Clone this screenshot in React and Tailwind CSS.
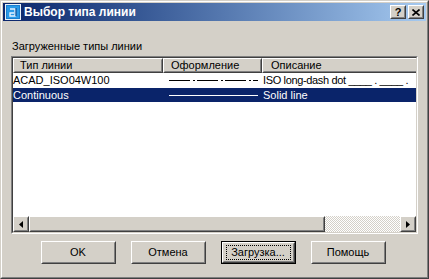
import React from 'react'

const face = 'bg-[#d4d0c8]'

function Raised({ className = '', children }) {
  return (
    <div className={`shrink-0 border border-t-white border-l-white border-b-[#404040] border-r-[#404040] ${className}`}>
      <div className="w-full h-full border border-t-[#d4d0c8] border-l-[#d4d0c8] border-b-[#808080] border-r-[#808080] flex items-center justify-center">
        {children}
      </div>
    </div>
  )
}

function Button({ label, isDefault }) {
  if (isDefault) {
    return (
      <div className="w-[75px] h-[23px] border border-black">
        <Raised className="w-full h-full">
          <div className="w-[65px] h-[15px] border border-dotted border-black flex items-center justify-center">{label}</div>
        </Raised>
      </div>
    )
  }
  return <Raised className="w-[75px] h-[23px]">{label}</Raised>
}

function AppIcon() {
  return (
    <svg width="16" height="16" viewBox="0 0 16 16">
      <rect x="0" y="0" width="16" height="16" fill="#e8f0f8" />
      <rect x="1" y="1" width="14" height="14" fill="#1a7fd0" />
      <rect x="2" y="2" width="12" height="12" fill="#2a9ae8" />
      <path d="M5 5h5v7H5V9h4" fill="none" stroke="#e6f2ff" strokeWidth="1.4" />
      <path d="M11 4v8" stroke="#0a3a80" strokeWidth="1" />
    </svg>
  )
}

function DashDot() {
  return (
    <svg width="90" height="3" viewBox="0 0 90 3">
      <g stroke="#000" strokeWidth="1">
        <line x1="0" y1="1.5" x2="21" y2="1.5" />
        <line x1="24" y1="1.5" x2="26" y2="1.5" />
        <line x1="28" y1="1.5" x2="49" y2="1.5" />
        <line x1="52" y1="1.5" x2="54" y2="1.5" />
        <line x1="56" y1="1.5" x2="77" y2="1.5" />
        <line x1="80" y1="1.5" x2="82" y2="1.5" />
        <line x1="84" y1="1.5" x2="89" y2="1.5" />
      </g>
    </svg>
  )
}

export default function App() {
  return (
    <div className="w-[429px] h-[279px] text-[11px] text-black" style={{ fontFamily: '"Liberation Sans", Arial, sans-serif' }}>
      <div className={`w-full h-full border border-t-[#d4d0c8] border-l-[#d4d0c8] border-b-[#404040] border-r-[#404040] ${face}`}>
        <div className="w-full h-full border border-t-white border-l-white border-b-[#808080] border-r-[#808080] p-px flex flex-col">
          {/* title bar */}
          <div className="h-[18px] flex items-center pl-[2px] pr-[2px] bg-gradient-to-r from-[#0a246a] to-[#a6caf0]">
            <AppIcon />
            <span className="ml-[3px] text-white font-bold text-[12px] leading-none">Выбор типа линии</span>
            <div className="ml-auto flex gap-[2px]">
              <Raised className={`w-[16px] h-[14px] ${face}`}>
                <span className="font-bold text-[11px] leading-none">?</span>
              </Raised>
              <Raised className={`w-[16px] h-[14px] ${face}`}>
                <svg width="8" height="7" viewBox="0 0 8 7">
                  <path d="M0.5 0.5L7.5 6.5M7.5 0.5L0.5 6.5" stroke="#000" strokeWidth="1.6" />
                </svg>
              </Raised>
            </div>
          </div>

          <div className="px-[8px] pt-[19px]">
            <div className="leading-[13px] pl-px">Загруженные типы линии</div>

            {/* list box */}
            <div className="mt-[3px] h-[178px] border border-t-[#808080] border-l-[#808080] border-b-white border-r-white">
              <div className="h-full border border-t-[#404040] border-l-[#404040] border-b-[#d4d0c8] border-r-[#d4d0c8] bg-white flex flex-col overflow-hidden">
                <div className="flex h-[15px] shrink-0">
                  <Raised className={`w-[150px] h-full ${face}`}>
                    <span className="w-full pl-[5px]">Тип линии</span>
                  </Raised>
                  <Raised className={`w-[99px] h-full ${face}`}>
                    <span className="w-full pl-[6px]">Оформление</span>
                  </Raised>
                  <Raised className={`w-[170px] h-full ${face}`}>
                    <span className="w-full pl-[7px]">Описание</span>
                  </Raised>
                </div>
                <div className="flex h-[15px] items-center">
                  <span className="w-[150px] shrink-0">ACAD_ISO04W100</span>
                  <span className="w-[99px] shrink-0 pl-[6px] flex items-center"><DashDot /></span>
                  <span className="pl-px whitespace-nowrap tracking-[-0.35px]">ISO long-dash dot ____ . ____ .</span>
                </div>
                <div className="flex h-[14px] items-center bg-[#0a246a] text-white">
                  <span className="w-[150px] shrink-0">Continuous</span>
                  <span className="w-[99px] shrink-0 pl-[6px] flex items-center">
                    <span className="block w-[89px] h-px bg-white" />
                  </span>
                  <span className="pl-px">Solid line</span>
                </div>
                <div className="flex-1" />
                {/* horizontal scrollbar */}
                <div className="flex h-[16px] shrink-0">
                  <Raised className={`w-[16px] h-full ${face}`}>
                    <svg width="4" height="7" viewBox="0 0 4 7"><path d="M4 0L0 3.5L4 7Z" fill="#000" /></svg>
                  </Raised>
                  <Raised className={`w-[296px] h-full ${face}`} />
                  <div className="flex-1 bg-[repeating-conic-gradient(#d4d0c8_0_25%,#ffffff_0_50%)] bg-[length:2px_2px]" />
                  <Raised className={`w-[16px] h-full ${face}`}>
                    <svg width="4" height="7" viewBox="0 0 4 7"><path d="M0 0L4 3.5L0 7Z" fill="#000" /></svg>
                  </Raised>
                </div>
              </div>
            </div>

            <div className="mt-[7px] flex justify-center gap-[15px] pr-[3px]">
              <Button label="OK" />
              <Button label="Отмена" />
              <Button label="Загрузка..." isDefault />
              <Button label="Помощь" />
            </div>
          </div>
        </div>
      </div>
    </div>
  )
}
